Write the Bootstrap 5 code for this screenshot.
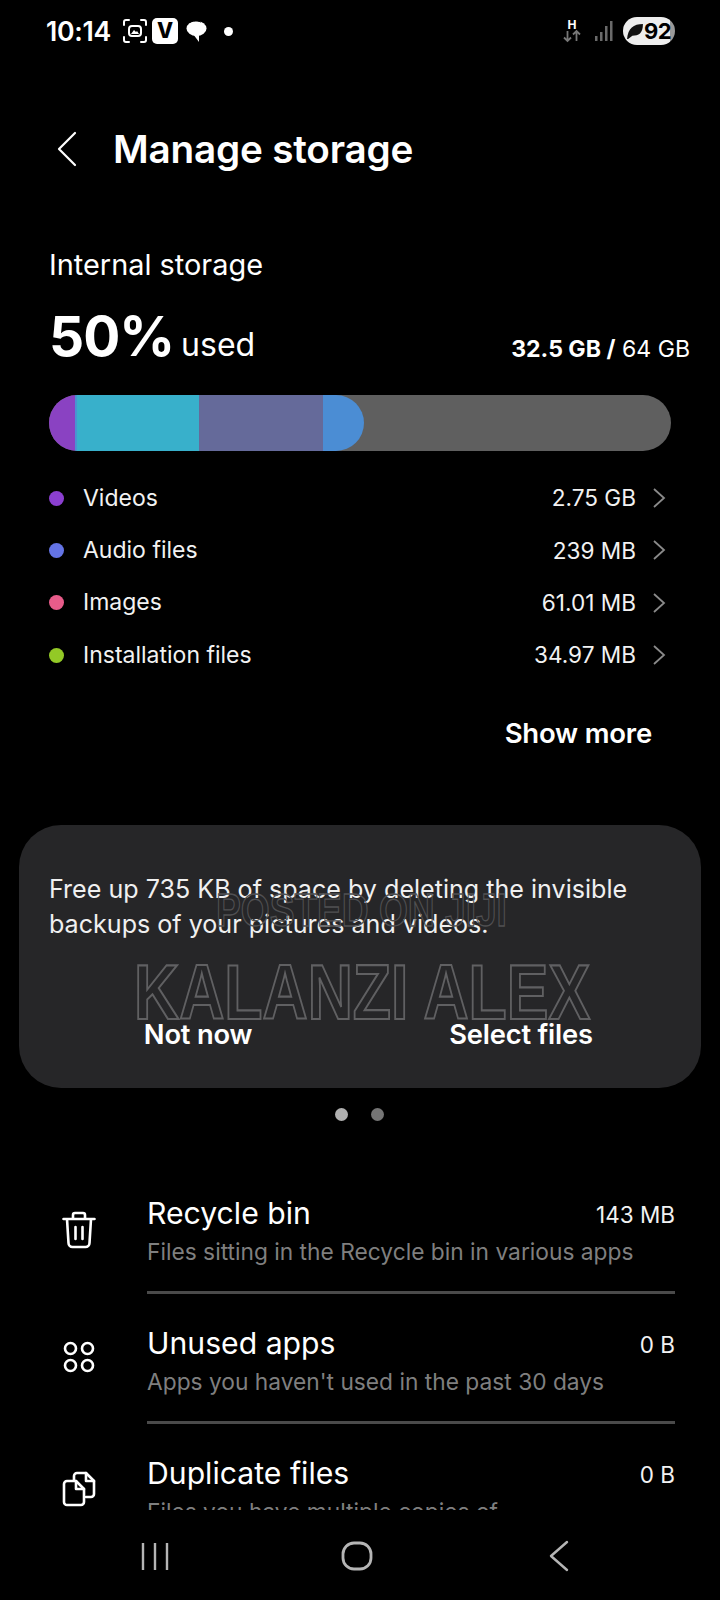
<!DOCTYPE html>
<html lang="en">
<head>
<meta charset="utf-8">
<title>Manage storage</title>
<link href="https://cdn.jsdelivr.net/npm/bootstrap@5.3.0/dist/css/bootstrap.min.css" rel="stylesheet">
<style>
html,body{background:#000;color:#fff;margin:0}
body{font-family:Inter,"Liberation Sans",sans-serif}
.screen{width:720px;height:1600px;overflow:hidden;background:#000}
.stat-bar{height:62px;padding:0 45px 0 46px;flex:none}
.stat-time{font:600 26.7px/1 Inter,sans-serif;letter-spacing:-.3px;margin-right:12px}
.stat-icons{gap:6px}
.stat-dot{width:9px;height:9px;border-radius:50%;background:#fff;margin-left:10px}
.stat-v{width:26px;height:26px;border-radius:5px;background:#fff;color:#000;font:800 21px/26px Inter,sans-serif;text-align:center;margin-left:-1px}
.batt{height:28px;width:52px;border-radius:14px;background:linear-gradient(90deg,#eee 0 90%,#999 90%);color:#000;font:700 22px/28px Inter,sans-serif;padding-left:3px;margin-left:9px;letter-spacing:-.5px}
.head-row{height:64px;margin-top:55px;padding-left:56px;flex:none}
.head-title{font:600 38.700px/1 Inter,sans-serif;margin:0 0 0 35px;letter-spacing:-.2px}
.main-wrap{flex:1 1 0;overflow:hidden;min-height:0}
.store-block{padding:0 49px}
.store-label{font-size:28.900px;line-height:36px;margin-top:66px}
.use-row{margin-top:22px;height:62px}
.use-pct{font:700 55px/62px Inter,sans-serif;letter-spacing:-1px}
.use-word{font-size:32px;margin-left:7px}
.use-total{font-size:23.100px;margin-right:-19px;position:relative;top:1px}
.store-track{height:56px;width:622px;border-radius:28px;background:#5f5f5f;margin-top:28px;overflow:hidden}
.store-fill{height:100%;width:315px;border-radius:0 28px 28px 0;overflow:hidden}
.seg{height:100%}
.seg-a{width:26px;background:#8a42c2}
.seg-a2{width:2px;background:#4b92d2}
.seg-b{width:122px;background:#38b0cb}
.seg-c{width:124px;background:#656a9a}
.seg-d{width:41px;background:#4b8dd4}
.cat-list{margin-top:21px;padding-right:5px}
.cat-row{height:52.3px;font-size:23px;color:#f2f2f2}
.cat-dot{width:15px;height:15px;border-radius:50%;margin-right:19px;flex:none}
.cat-val{margin-left:auto;margin-right:16px;font-size:22.600px}
.more-row{margin-top:32px;padding-right:19px;font:600 27.500px/40px Inter,sans-serif;letter-spacing:-.2px}
.promo{margin:72px 19px 0;height:263px;background:#262628;border-radius:42px;padding:47px 30px 0;position:relative;overflow:hidden}
.promo-text{font-size:25.100px;line-height:34.500px;color:#f0f0f0;margin:0}
.promo-btn{position:absolute;top:190px;transform:translateX(-50%);white-space:nowrap;font:600 27.300px/40px Inter,sans-serif;letter-spacing:-.2px}
.wm{position:absolute;white-space:nowrap;color:transparent;font-family:"Liberation Sans",sans-serif;font-weight:700;line-height:.72;transform-origin:0 0}
.wm-a{left:197px;top:68px;font-size:47px;transform:scaleX(.79);-webkit-text-stroke:1.300px #505052}
.wm-b{left:115px;top:140px;font-size:77px;transform:scaleX(.812);-webkit-text-stroke:2.200px #606062}
.pager{height:13px;margin-top:20px;gap:23px;padding-right:2px}
.pg{width:13px;height:13px;border-radius:50%;background:#b0b0b0}
.pg2{background:#757575}
.act-list{margin-top:43px}
.act-row{height:130px;padding:0 45px 0 0}
.act-icon{width:147px;flex:none;display:flex;justify-content:center;padding-left:10px;padding-top:47px}
.act-icon svg{flex:none}
.act-body{flex:1;padding-top:30px;position:relative}
.act-top{font-size:30.200px;line-height:38px}
.act-val{font-size:22.500px;margin-top:4px;color:#f2f2f2}
.act-sub{font-size:22.750px;line-height:34px;color:#7f7f7f;margin-top:3px}
.act-line{height:3px;background:#4a4a4a;position:absolute;left:0;right:0;bottom:0}
.navi{height:90px;flex:none;background:#000;padding:2px 150px 0 139px}
.nav-home{margin-right:8px}
</style>
</head>
<body>
<div class="screen d-flex flex-column">
  <div class="stat-bar d-flex align-items-center">
    <span class="stat-time">10:14</span>
    <div class="stat-icons d-flex align-items-center">
      <svg width="24" height="24" viewBox="0 0 24 24" fill="none" stroke="#fff" stroke-width="2" stroke-linecap="round"><path d="M1 6V3a2 2 0 0 1 2-2h3M18 1h3a2 2 0 0 1 2 2v3M23 18v3a2 2 0 0 1-2 2h-3M6 23H3a2 2 0 0 1-2-2v-3"/><rect x="6" y="7" width="12" height="10" rx="3"/><path d="M8 15l3-4 2 2 1-1 2 3z" fill="#fff" stroke="none"/></svg>
      <span class="stat-v">V</span>
      <svg width="24" height="24" viewBox="0 0 24 24" fill="#fff"><ellipse cx="12.500" cy="9.500" rx="10" ry="7.500"/><path d="M9 15l6 8v-8z"/><path d="M3 5.500C6 2 12 1 17 3" stroke="#000" stroke-width="1" fill="none"/></svg>
      <span class="stat-dot"></span>
    </div>
    <div class="ms-auto d-flex align-items-center">
      <svg width="20" height="26" viewBox="0 0 20 26" class="me-2"><text x="10" y="11" text-anchor="middle" font-family="Inter,sans-serif" font-weight="700" font-size="12" fill="#fff">H</text><path d="M5.500 13v10M2 19.500l3.500 3.500 3.500-3.500M14.500 23V13M11 16.500l3.500-3.500 3.500 3.500" stroke="#777" stroke-width="1.800" fill="none"/></svg>
      <svg width="20" height="22" viewBox="0 0 20 22" class="ms-1" fill="#6a6a6a"><rect x="1" y="16" width="2.500" height="5"/><rect x="6" y="12" width="2.500" height="9"/><rect x="11" y="6" width="2.500" height="15"/><rect x="16" y="1" width="2.500" height="20"/></svg>
      <div class="batt d-flex align-items-center">
        <svg width="18" height="18" viewBox="0 0 17 17"><path d="M1 16C2 6 7 2 16 2c0 9-4 11-10 11L2 16z" fill="#111"/></svg><span>92</span>
      </div>
    </div>
  </div>

  <div class="main-wrap">
    <div class="head-row d-flex align-items-center">
      <svg width="22" height="36" viewBox="0 0 22 36" fill="none" stroke="#fff" stroke-width="2.200" stroke-linecap="round" stroke-linejoin="round"><path d="M19 2L3 18l16 16"/></svg>
      <h1 class="head-title">Manage storage</h1>
    </div>

    <div class="store-block">
      <div class="store-label">Internal storage</div>
      <div class="use-row d-flex align-items-baseline justify-content-between">
        <div><span class="use-pct">50%</span><span class="use-word">used</span></div>
        <div class="use-total"><b class="fw-bold">32.5 GB /</b> 64 GB</div>
      </div>
      <div class="store-track">
        <div class="store-fill d-flex">
          <div class="seg seg-a"></div><div class="seg seg-a2"></div><div class="seg seg-b"></div><div class="seg seg-c"></div><div class="seg seg-d"></div>
        </div>
      </div>
      <div class="cat-list">
        <div class="cat-row d-flex align-items-center"><span class="cat-dot" style="background:#8b3fd0"></span>Videos<span class="cat-val">2.75 GB</span><svg width="14" height="22" viewBox="0 0 14 22" fill="none" stroke="#8a8a8a" stroke-width="1.800"><path d="M2 2l10 9-10 9"/></svg></div>
        <div class="cat-row d-flex align-items-center"><span class="cat-dot" style="background:#6474e6"></span>Audio files<span class="cat-val">239 MB</span><svg width="14" height="22" viewBox="0 0 14 22" fill="none" stroke="#8a8a8a" stroke-width="1.800"><path d="M2 2l10 9-10 9"/></svg></div>
        <div class="cat-row d-flex align-items-center"><span class="cat-dot" style="background:#e85c8a"></span>Images<span class="cat-val">61.01 MB</span><svg width="14" height="22" viewBox="0 0 14 22" fill="none" stroke="#8a8a8a" stroke-width="1.800"><path d="M2 2l10 9-10 9"/></svg></div>
        <div class="cat-row d-flex align-items-center"><span class="cat-dot" style="background:#93c926"></span>Installation files<span class="cat-val">34.97 MB</span><svg width="14" height="22" viewBox="0 0 14 22" fill="none" stroke="#8a8a8a" stroke-width="1.800"><path d="M2 2l10 9-10 9"/></svg></div>
      </div>
      <div class="more-row text-end">Show more</div>
    </div>

    <div class="promo">
      <p class="promo-text">Free up 735 KB of space by deleting the invisible backups of your pictures and videos.</p>
      <span class="promo-btn" style="left:179px">Not now</span>
      <span class="promo-btn" style="left:502px">Select files</span>
      <span class="wm wm-a">POSTED ON JIJI</span>
      <span class="wm wm-b">KALANZI ALEX</span>
    </div>

    <div class="pager d-flex justify-content-center"><span class="pg"></span><span class="pg pg2"></span></div>

    <div class="act-list">
      <div class="act-row d-flex">
        <div class="act-icon"><svg width="34" height="38" viewBox="0 0 34 38" fill="none" stroke="#fff" stroke-width="2.600" stroke-linecap="round" stroke-linejoin="round"><path d="M1.500 8h31M11 8V4a2 2 0 0 1 2-2h8a2 2 0 0 1 2 2v4M5 8l1.500 24a4 4 0 0 0 4 4h13a4 4 0 0 0 4-4L29 8M13.500 16v12M20.500 16v12"/></svg></div>
        <div class="act-body">
          <div class="d-flex justify-content-between"><span class="act-top">Recycle bin</span><span class="act-val">143 MB</span></div>
          <div class="act-sub">Files sitting in the Recycle bin in various apps</div>
          <div class="act-line"></div>
        </div>
      </div>
      <div class="act-row d-flex">
        <div class="act-icon"><svg width="32" height="32" viewBox="0 0 32 32" fill="none" stroke="#fff" stroke-width="2.600"><circle cx="7.500" cy="7.500" r="5.500"/><circle cx="24.500" cy="7.500" r="5.500"/><circle cx="7.500" cy="24.500" r="5.500"/><circle cx="24.500" cy="24.500" r="5.500"/></svg></div>
        <div class="act-body">
          <div class="d-flex justify-content-between"><span class="act-top">Unused apps</span><span class="act-val">0 B</span></div>
          <div class="act-sub">Apps you haven't used in the past 30 days</div>
          <div class="act-line"></div>
        </div>
      </div>
      <div class="act-row d-flex">
        <div class="act-icon"><svg width="34" height="36" viewBox="0 0 34 36" fill="none" stroke="#fff" stroke-width="2.600" stroke-linecap="round" stroke-linejoin="round"><path d="M12 9V5a3 3 0 0 1 3-3h9l8 8v13a3 3 0 0 1-3 3h-5"/><path d="M24 2v8h8"/><path d="M5 10h9l8 8v13a3 3 0 0 1-3 3H5a3 3 0 0 1-3-3V13a3 3 0 0 1 3-3z"/><path d="M14 10v8h8"/></svg></div>
        <div class="act-body">
          <div class="d-flex justify-content-between"><span class="act-top">Duplicate files</span><span class="act-val">0 B</span></div>
          <div class="act-sub">Files you have multiple copies of</div>
        </div>
      </div>
    </div>
  </div>

  <div class="navi d-flex align-items-center justify-content-between">
    <svg width="34" height="30" viewBox="0 0 34 30" stroke="#b5b5b5" stroke-width="2.400"><path d="M4 2v27M16 2v27M28 2v27"/></svg>
    <svg class="nav-home" width="32" height="30" viewBox="0 0 32 30" fill="none" stroke="#b5b5b5" stroke-width="2.800"><rect x="2" y="2" width="28" height="26" rx="11"/></svg>
    <svg width="22" height="32" viewBox="0 0 22 32" fill="none" stroke="#b5b5b5" stroke-width="2.400" stroke-linecap="round" stroke-linejoin="round"><path d="M19 2L3 16l16 14"/></svg>
  </div>
</div>
<script src="https://cdn.jsdelivr.net/npm/bootstrap@5.3.0/dist/js/bootstrap.bundle.min.js"></script>
</body>
</html>
